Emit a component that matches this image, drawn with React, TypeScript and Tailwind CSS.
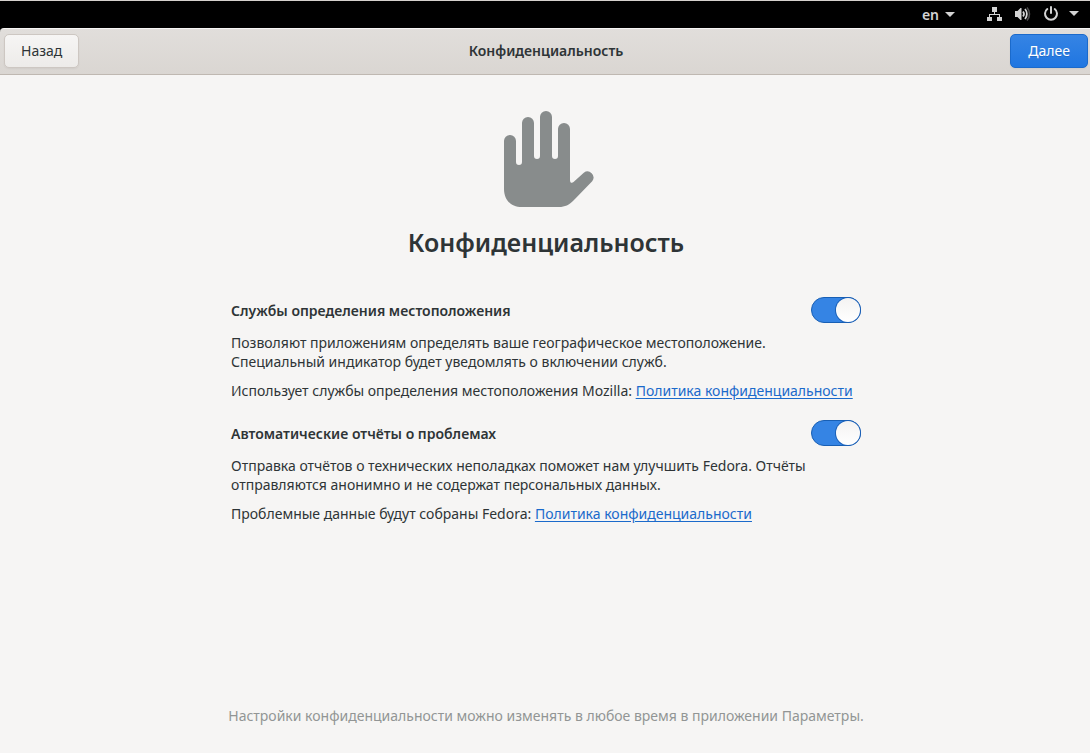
import { useState } from "react";

interface SectionProps {
	id: string;
	title: string;
	description: string;
	note: string;
	href: string;
}

const sections: SectionProps[] = [
	{
		id: "location",
		title: "Службы определения местоположения",
		description:
			"Позволяют приложениям определять ваше географическое местоположение. Специальный индикатор будет уведомлять о включении служб.",
		note: "Использует службы определения местоположения Mozilla:",
		href: "#location-policy",
	},
	{
		id: "reports",
		title: "Автоматические отчёты о проблемах",
		description:
			"Отправка отчётов о технических неполадках поможет нам улучшить Fedora. Отчёты отправляются анонимно и не содержат персональных данных.",
		note: "Проблемные данные будут собраны Fedora:",
		href: "#reports-policy",
	},
];

const Caret = () => (
	<svg width="10" height="5" viewBox="0 0 10 5" fill="currentColor">
		<path d="M0 0h10L5 5z" />
	</svg>
);

const NetworkIcon = () => (
	<svg width="16" height="16" viewBox="0 0 16 16" fill="currentColor">
		<path d="M5 1h5v5H8v2h5v3h2v4h-5v-4h2V9H3v2h2v4H0v-4h2V8h5V6H5z" />
	</svg>
);

const VolumeIcon = () => (
	<svg width="16" height="16" viewBox="0 0 16 16" fill="none">
		<path d="M0 5h2.5L5.500 2h1v12h-1L2.500 11H0z" fill="currentColor" />
		<path
			d="M8 5.500c1.200 1.500 1.200 3.500 0 5M10 3c2.500 2.800 2.500 7.200 0 10"
			stroke="currentColor"
			strokeWidth="1.8"
		/>
		<path
			d="M12 1.500c3.300 3.700 3.300 9.300 0 13"
			stroke="currentColor"
			strokeWidth="1.6"
			opacity="0.35"
		/>
	</svg>
);

const PowerIcon = () => (
	<svg
		width="16"
		height="16"
		viewBox="0 0 16 16"
		fill="none"
		stroke="currentColor"
		strokeWidth="2"
		strokeLinecap="round"
	>
		<path d="M8 1v6M4.300 3a6 6 0 1 0 7.400 0" />
	</svg>
);

const HandIcon = () => (
	<svg width="96" height="96" viewBox="-6 0 96 96" fill="#888c8c">
		<path d="M0 30a6 6 0 0 1 12 0v21a3 3 0 0 0 6 0V12a6 6 0 0 1 12 0v33a3 3 0 0 0 6 0V6a6 6 0 0 1 12 0v39a3 3 0 0 0 6 0V18a6 6 0 0 1 12 0v51c0 3 2 3.500 3.500 2L79.800 61.800a6 6 0 0 1 8.400 8.400L70 89c-5 5-9 7-15 7H18C7 96 0 89 0 78z" />
	</svg>
);

const TopBar = () => (
	<div className="flex h-7 items-center justify-end border-t border-[#d5d1cd] bg-black pr-[11px] text-[#d3d3d3]">
		<button className="mr-8 flex items-center gap-1.5 text-sm leading-5 font-semibold">
			en
			<Caret />
		</button>
		<button aria-label="Система" className="flex items-center gap-2.5 pb-0.5">
			<span className="flex gap-3">
				<NetworkIcon />
				<VolumeIcon />
				<PowerIcon />
			</span>
			<Caret />
		</button>
	</div>
);

const HeaderBar = () => (
	<div className="bg-black">
		<header className="grid h-[47px] grid-cols-[1fr_auto_1fr] items-center rounded-tl-sm border-t border-b border-t-[#f6f5f4] border-b-[#bfb8b1] bg-linear-to-b from-[#e1dedb] to-[#dad6d2] pr-0.5 pb-0.5 pl-1">
			<button className="h-[34px] justify-self-start rounded-[5px] border border-[#cdc7c2] bg-linear-to-b from-[#f6f5f4] to-[#edebe9] px-4 shadow-xs">
				Назад
			</button>
			<h2 className="font-semibold">Конфиденциальность</h2>
			<button className="h-[34px] justify-self-end rounded-[5px] border border-[#1b6acb] bg-linear-to-b from-[#3584e4] to-[#1f76e1] px-[17px] text-white shadow-xs text-shadow-2xs">
				Далее
			</button>
		</header>
	</div>
);

const Section = ({ id, title, description, note, href }: SectionProps) => {
	const [enabled, setEnabled] = useState(true);

	return (
		<section className="mb-5">
			<div className="flex items-center justify-between">
				<label htmlFor={id} className="font-semibold">
					{title}
				</label>
				<input
					id={id}
					type="checkbox"
					checked={enabled}
					onChange={(e) => setEnabled(e.target.checked)}
					className="h-[26px] w-[50px] appearance-none rounded-full border border-[#cdc7c2] bg-[#d6d1cd] before:block before:size-6 before:rounded-full before:bg-linear-to-b before:from-[#f4f3f2] before:to-white before:shadow-[0_0_0_1px_#1b5fb5] checked:border-[#185fb4] checked:bg-[#3584e4] checked:before:ml-6"
				/>
			</div>
			<p className="mt-2.5 max-w-[600px]">{description}</p>
			<p className="mt-2.5">
				{note}{" "}
				<a
					href={href}
					className="text-[#1b6acb] underline underline-offset-2"
				>
					Политика конфиденциальности
				</a>
			</p>
		</section>
	);
};

export default function App() {
	return (
		<div className="flex min-h-screen flex-col bg-[#f6f5f4] font-['Noto_Sans',sans-serif] text-sm leading-[19px] text-[#2e3436]">
			<TopBar />
			<HeaderBar />
			<div className="flex grow flex-col items-center pl-0.5">
				<main className="w-full max-w-[630px]">
					<div className="mt-9 flex flex-col items-center">
						<HandIcon />
						<h1 className="mt-4 mb-9 text-[25px] leading-[38px] font-semibold">
							Конфиденциальность
						</h1>
					</div>
					{sections.map((section) => (
						<Section key={section.id} {...section} />
					))}
				</main>
				<p className="mt-auto pb-7 text-center text-[#929595]">
					Настройки конфиденциальности можно изменять в любое время в
					приложении Параметры.
				</p>
			</div>
		</div>
	);
}
